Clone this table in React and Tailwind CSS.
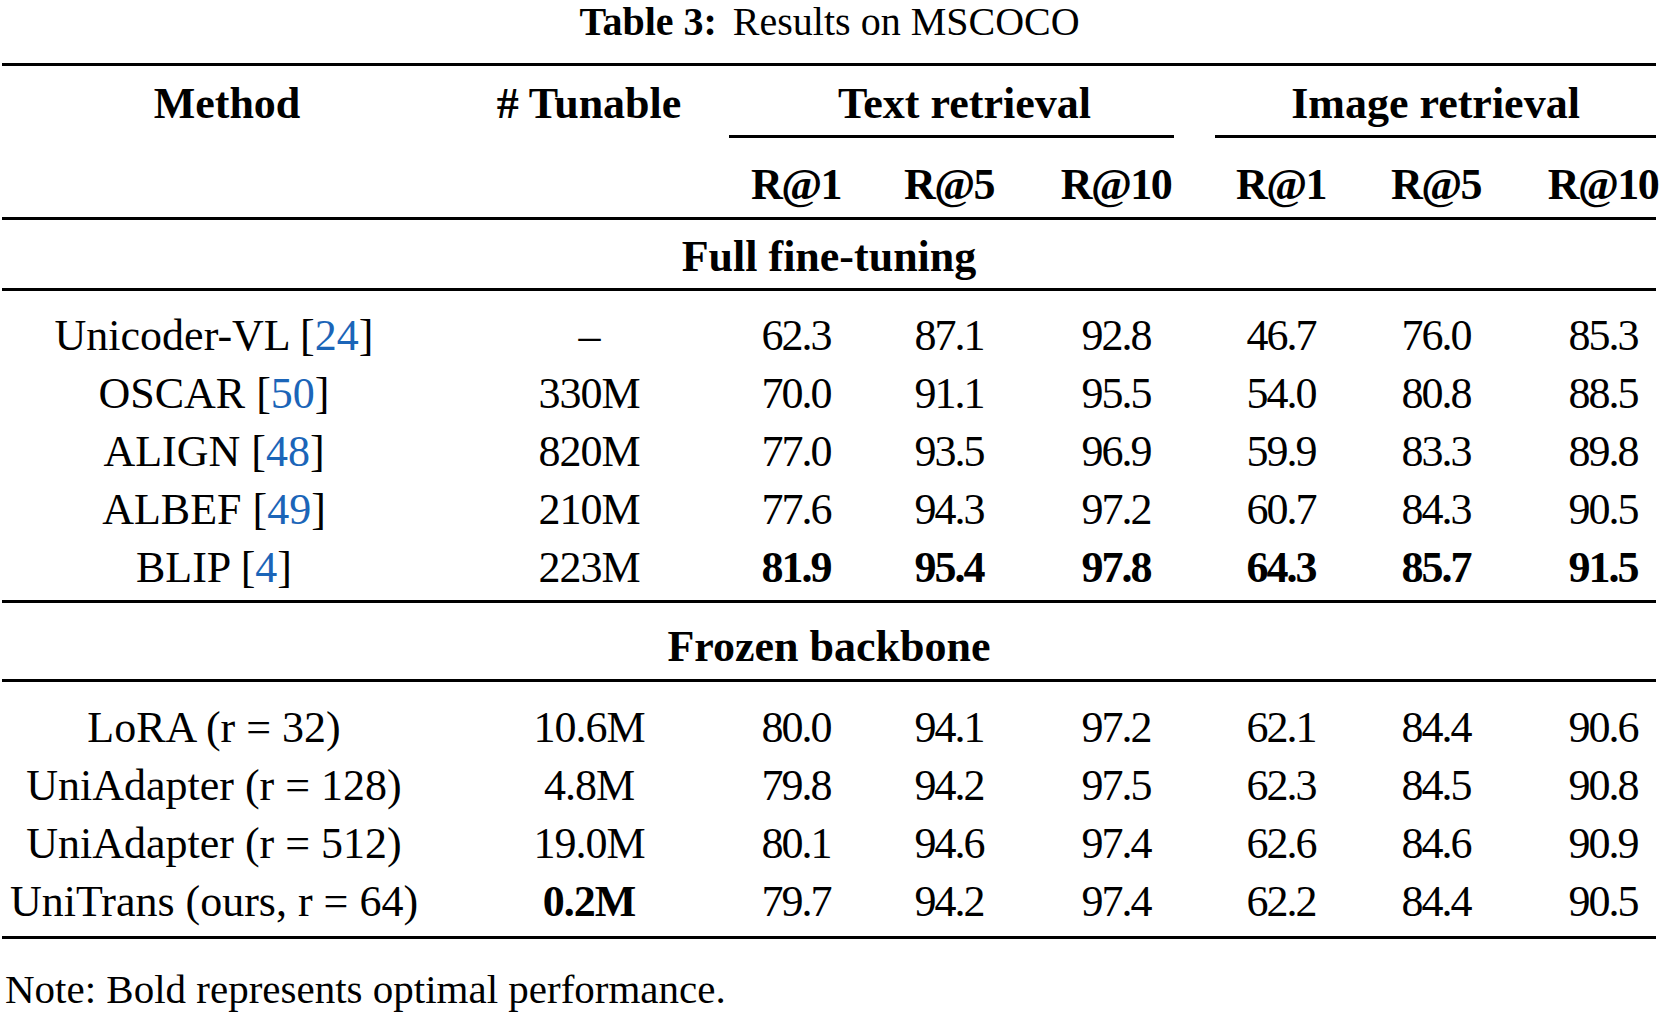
const COLS = [
  'w-[424px]',
  'ml-[53px] w-[220px]',
  'ml-[30px] w-[134px]',
  'ml-[21px] w-[130px]',
  'ml-[44px] w-[116px]',
  'ml-[41px] w-[132px]',
  'ml-[24px] w-[130px]',
  'ml-[49px] w-[106px]',
]

const FULL = [
  { method: 'Unicoder-VL', cite: '24', tunable: '–', values: ['62.3', '87.1', '92.8', '46.7', '76.0', '85.3'] },
  { method: 'OSCAR', cite: '50', tunable: '330M', values: ['70.0', '91.1', '95.5', '54.0', '80.8', '88.5'] },
  { method: 'ALIGN', cite: '48', tunable: '820M', values: ['77.0', '93.5', '96.9', '59.9', '83.3', '89.8'] },
  { method: 'ALBEF', cite: '49', tunable: '210M', values: ['77.6', '94.3', '97.2', '60.7', '84.3', '90.5'] },
  { method: 'BLIP', cite: '4', tunable: '223M', values: ['81.9', '95.4', '97.8', '64.3', '85.7', '91.5'], boldValues: true },
]

const FROZEN = [
  { method: 'LoRA (r = 32)', tunable: '10.6M', values: ['80.0', '94.1', '97.2', '62.1', '84.4', '90.6'] },
  { method: 'UniAdapter (r = 128)', tunable: '4.8M', values: ['79.8', '94.2', '97.5', '62.3', '84.5', '90.8'] },
  { method: 'UniAdapter (r = 512)', tunable: '19.0M', values: ['80.1', '94.6', '97.4', '62.6', '84.6', '90.9'] },
  { method: 'UniTrans (ours, r = 64)', tunable: '0.2M', boldTunable: true, values: ['79.7', '94.2', '97.4', '62.2', '84.4', '90.5'] },
]

function Rule() {
  return <div className="h-[3px] w-full bg-black" />
}

function Cell({ className = '', children }) {
  return (
    <div className={`flex shrink-0 justify-center whitespace-nowrap ${className}`}>
      {children}
    </div>
  )
}

function Row({ method, cite, tunable, values, boldValues, boldTunable }) {
  return (
    <div className="flex h-[58px] items-center">
      <Cell className={COLS[0]}>
        <span>
          {method}
          {cite && (
            <>
              {' '}[<span className="text-[#1b65b8]">{cite}</span>]
            </>
          )}
        </span>
      </Cell>
      <Cell className={`${COLS[1]} tracking-[-1px] ${boldTunable ? 'font-bold' : ''}`}>{tunable}</Cell>
      {values.map((v, i) => (
        <Cell key={i} className={`${COLS[i + 2]} tracking-[-2px] ${boldValues ? 'font-bold' : ''}`}>
          {v}
        </Cell>
      ))}
    </div>
  )
}

function SectionTitle({ children, className }) {
  return (
    <div className={`flex justify-center font-bold ${className}`}>
      {children}
    </div>
  )
}

export default function App() {
  return (
    <div className="h-[1014px] w-[1659px] overflow-hidden bg-white font-['Liberation_Serif',serif] text-black">
      {/* caption */}
      <div className="flex h-[40px] items-center justify-center pt-[3px] text-[40px] leading-[40px]">
        <span className="font-bold">Table 3:</span>
        <span className="ml-[16px]">Results on MSCOCO</span>
      </div>

      <div className="ml-[2px] mt-[23px] w-[1654px] text-[44px] leading-[44px]">
        <Rule />

        {/* header */}
        <div className="flex h-[151px] font-bold">
          <Cell className={`${COLS[0]} pt-[16px]`}>
            <span className="pl-[26px]">Method</span>
          </Cell>
          <Cell className={`${COLS[1]} pt-[16px]`}># Tunable</Cell>

          <div className="ml-[30px] flex w-[445px] shrink-0 flex-col">
            <div className="flex justify-center pt-[16px] pl-[26px]">Text retrieval</div>
            <div className="mt-[9px] h-[3px] bg-black" />
            <div className="mt-[25px] flex tracking-[-1.5px]">
              <Cell className="w-[134px]">R@1</Cell>
              <Cell className={COLS[3]}>R@5</Cell>
              <Cell className={COLS[4]}>R@10</Cell>
            </div>
          </div>

          <div className="ml-[41px] flex w-[441px] shrink-0 flex-col">
            <div className="flex justify-center pt-[16px]">Image retrieval</div>
            <div className="mt-[9px] h-[3px] bg-black" />
            <div className="mt-[25px] flex tracking-[-1.5px]">
              <Cell className="w-[132px]">R@1</Cell>
              <Cell className={COLS[6]}>R@5</Cell>
              <Cell className={COLS[7]}>R@10</Cell>
            </div>
          </div>
        </div>

        <Rule />
        <SectionTitle className="h-[68px] pt-[15px]">Full fine-tuning</SectionTitle>
        <Rule />

        <div className="pt-[16px] pb-[3px]">
          {FULL.map((r) => (
            <Row key={r.method} {...r} />
          ))}
        </div>

        <Rule />
        <SectionTitle className="h-[76px] pt-[22px]">Frozen backbone</SectionTitle>
        <Rule />

        <div className="pt-[17px] pb-[5px]">
          {FROZEN.map((r) => (
            <Row key={r.method} {...r} />
          ))}
        </div>

        <Rule />
      </div>

      <p className="ml-[5px] mt-[29px] text-[41px] leading-[42px]">
        Note: Bold represents optimal performance.
      </p>
    </div>
  )
}
